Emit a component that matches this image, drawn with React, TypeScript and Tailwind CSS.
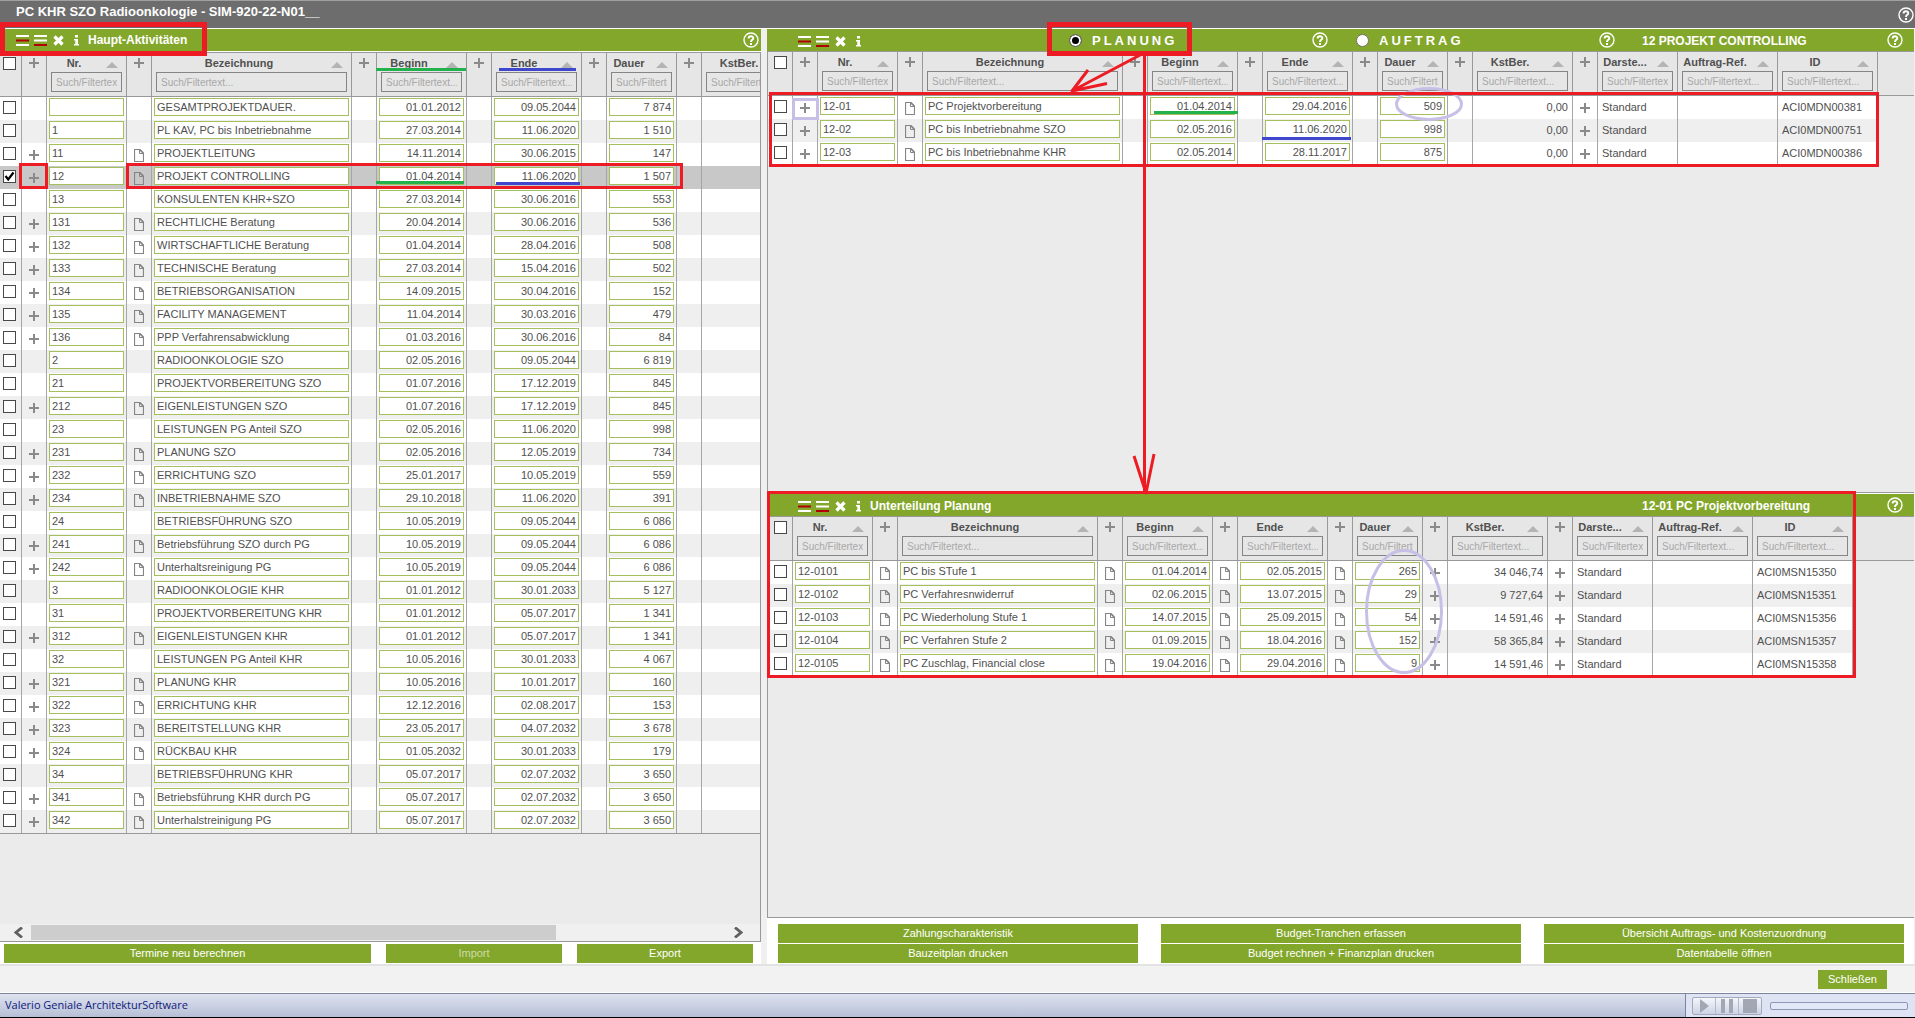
import { useState } from 'react';

type Row = Record<string, string>;

type Column = {
  kind: 'check' | 'icon' | 'edit' | 'text';
  width: string;
  label?: string;
  field?: string;
  right?: boolean;
  icon?: 'plus' | 'doc';
  // rows show the icon only when this row field is set
  when?: string;
};

const iconCol = (icon?: 'plus' | 'doc', when?: string): Column => ({
  kind: 'icon',
  width: 'w-[25px]',
  icon,
  when,
});

const nr: Column = { kind: 'edit', width: 'w-[80px]', label: 'Nr.', field: 'nr' };
const bezeichnung: Column = { kind: 'edit', width: 'w-[200px]', label: 'Bezeichnung', field: 'name' };
const beginn: Column = { kind: 'edit', width: 'w-[90px]', label: 'Beginn', field: 'start', right: true };
const ende: Column = { kind: 'edit', width: 'w-[90px]', label: 'Ende', field: 'end', right: true };
const dauer: Column = { kind: 'edit', width: 'w-[70px]', label: 'Dauer', field: 'days', right: true };
const kstBer: Column = { kind: 'text', width: 'w-[100px]', label: 'KstBer.', field: 'cost', right: true };
const details: Column[] = [
  { kind: 'text', width: 'w-[80px]', label: 'Darste...', field: 'view' },
  { kind: 'text', width: 'w-[100px]', label: 'Auftrag-Ref.', field: 'ref' },
  { kind: 'text', width: 'w-[100px]', label: 'ID', field: 'id' },
];

const mainColumns: Column[] = [
  { kind: 'check', width: 'w-[22px]' },
  iconCol('plus', 'sub'),
  nr,
  iconCol('doc', 'sub'),
  bezeichnung,
  iconCol(),
  beginn,
  iconCol(),
  ende,
  iconCol(),
  dauer,
  iconCol(),
  kstBer,
];

const planColumns: Column[] = [
  { kind: 'check', width: 'w-[25px]' },
  iconCol('plus'),
  nr,
  iconCol('doc'),
  bezeichnung,
  iconCol(),
  beginn,
  iconCol(),
  ende,
  iconCol(),
  dauer,
  iconCol(),
  kstBer,
  iconCol('plus'),
  ...details,
];

const subColumns: Column[] = [
  { kind: 'check', width: 'w-[25px]' },
  nr,
  iconCol('doc'),
  bezeichnung,
  iconCol('doc'),
  beginn,
  iconCol('doc'),
  ende,
  iconCol('doc'),
  dauer,
  iconCol('plus'),
  kstBer,
  iconCol('plus'),
  ...details,
];

const mainRows: Row[] = [
  ['', 'GESAMTPROJEKTDAUER.', '01.01.2012', '09.05.2044', '7 874', ''],
  ['1', 'PL KAV, PC bis Inbetriebnahme', '27.03.2014', '11.06.2020', '1 510', ''],
  ['11', 'PROJEKTLEITUNG', '14.11.2014', '30.06.2015', '147', 'x'],
  ['12', 'PROJEKT CONTROLLING', '01.04.2014', '11.06.2020', '1 507', 'x'],
  ['13', 'KONSULENTEN KHR+SZO', '27.03.2014', '30.06.2016', '553', ''],
  ['131', 'RECHTLICHE Beratung', '20.04.2014', '30.06.2016', '536', 'x'],
  ['132', 'WIRTSCHAFTLICHE Beratung', '01.04.2014', '28.04.2016', '508', 'x'],
  ['133', 'TECHNISCHE Beratung', '27.03.2014', '15.04.2016', '502', 'x'],
  ['134', 'BETRIEBSORGANISATION', '14.09.2015', '30.04.2016', '152', 'x'],
  ['135', 'FACILITY MANAGEMENT', '11.04.2014', '30.03.2016', '479', 'x'],
  ['136', 'PPP Verfahrensabwicklung', '01.03.2016', '30.06.2016', '84', 'x'],
  ['2', 'RADIOONKOLOGIE SZO', '02.05.2016', '09.05.2044', '6 819', ''],
  ['21', 'PROJEKTVORBEREITUNG SZO', '01.07.2016', '17.12.2019', '845', ''],
  ['212', 'EIGENLEISTUNGEN SZO', '01.07.2016', '17.12.2019', '845', 'x'],
  ['23', 'LEISTUNGEN PG Anteil SZO', '02.05.2016', '11.06.2020', '998', ''],
  ['231', 'PLANUNG SZO', '02.05.2016', '12.05.2019', '734', 'x'],
  ['232', 'ERRICHTUNG SZO', '25.01.2017', '10.05.2019', '559', 'x'],
  ['234', 'INBETRIEBNAHME SZO', '29.10.2018', '11.06.2020', '391', 'x'],
  ['24', 'BETRIEBSFÜHRUNG SZO', '10.05.2019', '09.05.2044', '6 086', ''],
  ['241', 'Betriebsführung SZO durch PG', '10.05.2019', '09.05.2044', '6 086', 'x'],
  ['242', 'Unterhaltsreinigung PG', '10.05.2019', '09.05.2044', '6 086', 'x'],
  ['3', 'RADIOONKOLOGIE KHR', '01.01.2012', '30.01.2033', '5 127', ''],
  ['31', 'PROJEKTVORBEREITUNG KHR', '01.01.2012', '05.07.2017', '1 341', ''],
  ['312', 'EIGENLEISTUNGEN KHR', '01.01.2012', '05.07.2017', '1 341', 'x'],
  ['32', 'LEISTUNGEN PG Anteil KHR', '10.05.2016', '30.01.2033', '4 067', ''],
  ['321', 'PLANUNG KHR', '10.05.2016', '10.01.2017', '160', 'x'],
  ['322', 'ERRICHTUNG KHR', '12.12.2016', '02.08.2017', '153', 'x'],
  ['323', 'BEREITSTELLUNG KHR', '23.05.2017', '04.07.2032', '3 678', 'x'],
  ['324', 'RÜCKBAU KHR', '01.05.2032', '30.01.2033', '179', 'x'],
  ['34', 'BETRIEBSFÜHRUNG KHR', '05.07.2017', '02.07.2032', '3 650', ''],
  ['341', 'Betriebsführung KHR durch PG', '05.07.2017', '02.07.2032', '3 650', 'x'],
  ['342', 'Unterhalstreinigung PG', '05.07.2017', '02.07.2032', '3 650', 'x'],
].map(([nr, name, start, end, days, sub]) => ({ nr, name, start, end, days, sub }));

const planRows: Row[] = [
  ['12-01', 'PC Projektvorbereitung', '01.04.2014', '29.04.2016', '509', 'ACI0MDN00381'],
  ['12-02', 'PC bis Inbetriebnahme SZO', '02.05.2016', '11.06.2020', '998', 'ACI0MDN00751'],
  ['12-03', 'PC bis Inbetriebnahme KHR', '02.05.2014', '28.11.2017', '875', 'ACI0MDN00386'],
].map(([nr, name, start, end, days, id]) => ({ nr, name, start, end, days, id, cost: '0,00', view: 'Standard' }));

const subRows: Row[] = [
  ['12-0101', 'PC bis STufe 1', '01.04.2014', '02.05.2015', '265', '34 046,74', 'ACI0MSN15350'],
  ['12-0102', 'PC Verfahresnwiderruf', '02.06.2015', '13.07.2015', '29', '9 727,64', 'ACI0MSN15351'],
  ['12-0103', 'PC Wiederholung Stufe 1', '14.07.2015', '25.09.2015', '54', '14 591,46', 'ACI0MSN15356'],
  ['12-0104', 'PC Verfahren Stufe 2', '01.09.2015', '18.04.2016', '152', '58 365,84', 'ACI0MSN15357'],
  ['12-0105', 'PC Zuschlag, Financial close', '19.04.2016', '29.04.2016', '9', '14 591,46', 'ACI0MSN15358'],
].map(([nr, name, start, end, days, cost, id]) => ({ nr, name, start, end, days, cost, id, view: 'Standard' }));

function PlusIcon() {
  return (
    <svg width="10" height="13" viewBox="0 0 10 13">
      <path d="M0 6H10M5 1V11" stroke="#8a8a8a" strokeWidth="2" />
    </svg>
  );
}

function DocIcon() {
  return (
    <svg width="10" height="13" viewBox="0 0 10 13" fill="none" stroke="#858585">
      <path d="M.5 .5H6L9.500 4V12.500H.5Z" strokeWidth="1.200" />
      <path d="M5.500 .5V4.500H9.500" />
      <path d="M6 1L9 4" strokeWidth="1.400" />
    </svg>
  );
}

function HelpButton() {
  return (
    <button type="button" aria-label="Hilfe" className="block shrink-0">
      <svg width="16" height="16" viewBox="0 0 16 16" fill="none" stroke="#fff">
        <circle cx="8" cy="8" r="7" strokeWidth="1.400" />
        <path d="M5.600 6.400C5.600 3.400 10.400 3.500 10.300 6.300C10.200 7.900 8 7.900 8 10" strokeWidth="1.900" />
        <path d="M8 11V12.900" strokeWidth="2" />
      </svg>
    </button>
  );
}

function ToolIcons() {
  return (
    <div className="flex items-center gap-[5px]">
      <button type="button" aria-label="Zeile einfügen">
        <svg className="block" width="13" height="12" viewBox="0 0 13 12">
          <path d="M0 2H13M0 11H13" stroke="#fff" strokeWidth="2" />
          <path d="M0 6.500H13" stroke="#b00000" strokeWidth="2" />
        </svg>
      </button>
      <button type="button" aria-label="Zeile anhängen">
        <svg className="block" width="13" height="12" viewBox="0 0 13 12">
          <path d="M0 2H13M0 6.500H13" stroke="#fff" strokeWidth="2" />
          <path d="M0 11H13" stroke="#b00000" strokeWidth="2" />
        </svg>
      </button>
      <button type="button" aria-label="Löschen">
        <svg className="block" width="13" height="12" viewBox="0 0 13 12">
          <path d="M2.500 2.500L10.500 10.500M10.500 2.500L2.500 10.500" stroke="#fff" strokeWidth="3.200" />
        </svg>
      </button>
      <button type="button" aria-label="Info">
        <svg className="block" width="13" height="12" viewBox="0 0 13 12" fill="#fff">
          <path d="M5 1H8V3.500H5ZM4 5H8V10H9V11.500H4V10H5.300V6.500H4Z" />
        </svg>
      </button>
    </div>
  );
}

function Check({ label, checked = false }: { label: string; checked?: boolean }) {
  return (
    <span className="relative block h-[13px] w-[13px]">
      <input
        type="checkbox"
        aria-label={label}
        defaultChecked={checked}
        className="peer block h-[13px] w-[13px] appearance-none border border-[#484848] bg-white"
      />
      <svg
        className="pointer-events-none absolute top-0 left-0 hidden peer-checked:block"
        width="13"
        height="13"
        viewBox="0 0 13 13"
      >
        <path d="M2.500 6L5.200 9.500L10.500 2.500" fill="none" stroke="#000" strokeWidth="2.200" />
      </svg>
    </span>
  );
}

function HeaderCell({ column }: { column: Column }) {
  if (column.kind === 'check') {
    return (
      <div className="flex h-[43px] justify-end pt-1 pr-[5px]">
        <Check label="Alle auswählen" />
      </div>
    );
  }
  if (column.kind === 'icon') {
    return (
      <button type="button" aria-label="Spalte öffnen" className="flex h-[43px] w-full justify-center pt-1">
        <PlusIcon />
      </button>
    );
  }
  return (
    <div className="h-[43px]">
      <div className="flex h-[19px] items-center">
        <span className="flex-1 pt-[2px] text-center whitespace-nowrap">{column.label}</span>
        <svg className="mt-[5px] mr-2 ml-[5px] shrink-0" width="12" height="6" viewBox="0 0 12 6">
          <path d="M0 6L6 0L12 6Z" fill="#b4b4b4" />
        </svg>
      </div>
      <div className="px-1">
        <input
          type="text"
          aria-label={`Filter ${column.label}`}
          placeholder="Such/Filtertext..."
          className="block h-5 w-full border border-[#858585] bg-transparent px-1 text-[10px] font-normal placeholder:text-[#a8a8a8]"
        />
      </div>
    </div>
  );
}

function BodyCell({ column, row, selected }: { column: Column; row: Row; selected: boolean }) {
  const value = row[column.field ?? ''] ?? '';
  if (column.kind === 'check') {
    return (
      <div className="flex h-[23px] justify-end pt-1 pr-[5px]">
        <Check label={`${row.nr} ${row.name} auswählen`} checked={selected} />
      </div>
    );
  }
  if (column.kind === 'icon') {
    if (!column.icon || (column.when && !row[column.when])) return null;
    return (
      <button
        type="button"
        aria-label={column.icon === 'plus' ? 'Aufklappen' : 'Notiz'}
        className="flex h-[23px] w-full items-center justify-center pt-[2px]"
      >
        {column.icon === 'plus' ? <PlusIcon /> : <DocIcon />}
      </button>
    );
  }
  if (column.kind === 'edit') {
    return (
      <div className="h-[23px] px-[2px] pt-px">
        <input
          type="text"
          aria-label={column.label}
          defaultValue={value}
          className={`block h-[18px] w-full border border-[#a3c05c] bg-white px-[2px] ${column.right ? 'text-right' : ''}`}
        />
      </div>
    );
  }
  return (
    <div className={`h-[23px] px-1 leading-[23px] whitespace-nowrap ${column.right ? 'text-right' : ''}`}>
      {value}
    </div>
  );
}

function Grid({ columns, rows, selected }: { columns: Column[]; rows: Row[]; selected?: string }) {
  return (
    <table className="w-full table-fixed border-separate border-spacing-0 border-t border-[#999999] text-[11px] text-[#505050]">
      <thead className="bg-[#e6e6e6]">
        <tr>
          {columns.map((column, i) => (
            <th key={i} className={`${column.width} border-r border-b border-[#999999] p-0 align-top`}>
              <HeaderCell column={column} />
            </th>
          ))}
          <th className="border-b border-[#999999] p-0" />
        </tr>
      </thead>
      <tbody>
        {rows.map((row, n) => {
          const active = selected !== undefined && row.nr === selected;
          const bg = active ? 'bg-[#c8c8c8]' : n % 2 ? 'bg-[#efefef]' : 'bg-white';
          return (
            <tr key={n}>
              {columns.map((column, i) => (
                <td key={i} className={`${bg} h-[23px] border-r border-[#a6a6a6] p-0 align-top`}>
                  <BodyCell column={column} row={row} selected={active} />
                </td>
              ))}
              <td className="p-0" />
            </tr>
          );
        })}
      </tbody>
    </table>
  );
}

function ActionButton({ label, disabled = false, className = '' }: { label: string; disabled?: boolean; className?: string }) {
  return (
    <button
      type="button"
      disabled={disabled}
      className={`h-[19px] bg-[#83a72b] text-center text-[11px] leading-[19px] text-white disabled:text-[#cddba8] ${className}`}
    >
      {label}
    </button>
  );
}

function MainPanel() {
  return (
    <section className="relative flex w-[761px] shrink-0 flex-col bg-white">
      <header className="flex h-[22px] items-center bg-[#83a72b] pr-[2px] pl-4 text-xs font-bold text-white">
        <ToolIcons />
        <h2 className="ml-[5px] flex-1">Haupt-Aktivitäten</h2>
        <HelpButton />
      </header>
      <div className="mt-px flex flex-1 flex-col border-r border-b border-[#999999] bg-[#ebebeb]">
        <div className="flex-1 overflow-hidden">
          <Grid columns={mainColumns} rows={mainRows} selected="12" />
          <div className="border-t border-[#999999]" />
        </div>
        <div className="flex h-[17px] items-center bg-[#f0f0f0]">
          <button type="button" aria-label="Nach links" className="flex w-[31px] justify-center pl-[6px]">
            <svg width="9" height="11" viewBox="0 0 9 11">
              <path d="M8 .5L2 5.500L8 10.500" fill="none" stroke="#606060" strokeWidth="2.800" />
            </svg>
          </button>
          <div className="flex-1">
            <div className="h-[15px] w-3/4 bg-[#cdcdcd]" />
          </div>
          <button type="button" aria-label="Nach rechts" className="flex w-[29px] justify-start pl-[3px]">
            <svg width="9" height="11" viewBox="0 0 9 11">
              <path d="M1 .5L7 5.500L1 10.500" fill="none" stroke="#606060" strokeWidth="2.800" />
            </svg>
          </button>
        </div>
      </div>
      <div className="flex gap-[15px] pt-[2px] pr-2 pb-px pl-1">
        <ActionButton label="Termine neu berechnen" className="w-[367px]" />
        <ActionButton label="Import" disabled className="flex-1" />
        <ActionButton label="Export" className="flex-1" />
      </div>
      <svg
        className="pointer-events-none absolute top-0 left-0 overflow-visible"
        width="700"
        height="170"
        viewBox="0 29 700 170"
        fill="none"
        stroke="#ed1c24"
        strokeWidth="3"
      >
        <rect x="2.500" y="24.500" width="202" height="29" strokeWidth="5" />
        <rect x="20.500" y="164.500" width="26" height="23" />
        <rect x="127.500" y="164.500" width="554" height="23" />
        <path d="M376 69.500H466M376 182.500H464" stroke="#22b14c" />
        <path d="M499 69.500H576M496 183.500H580" stroke="#3f48cc" />
      </svg>
    </section>
  );
}

function ModeRadio({ label, checked, onChange }: { label: string; checked: boolean; onChange: () => void }) {
  return (
    <label className="flex w-[243px] items-center gap-[10px] pt-[2px] text-[13px] tracking-[3px]">
      <input
        type="radio"
        name="mode"
        checked={checked}
        onChange={onChange}
        className="h-[13px] w-[13px] appearance-none rounded-full border border-[#707070] bg-white checked:bg-black checked:shadow-[inset_0_0_0_2px_white]"
      />
      {label}
    </label>
  );
}

function PlanPanel() {
  const [mode, setMode] = useState('planung');

  return (
    <section className="relative flex min-w-0 flex-1 flex-col bg-white">
      <div className="flex h-[464px] flex-col">
        <header className="flex h-[22px] shrink-0 items-center bg-[#83a72b] pr-[11px] pl-[31px] text-xs font-bold text-white">
          <div className="w-[271px] pt-[2px]">
            <ToolIcons />
          </div>
          <ModeRadio label="PLANUNG" checked={mode === 'planung'} onChange={() => setMode('planung')} />
          <HelpButton />
          <div className="w-7" />
          <ModeRadio label="AUFTRAG" checked={mode === 'auftrag'} onChange={() => setMode('auftrag')} />
          <HelpButton />
          <h2 className="ml-[27px] flex-1 pt-[2px] whitespace-nowrap">12 PROJEKT CONTROLLING</h2>
          <HelpButton />
        </header>
        <div className="flex-1 overflow-hidden border-b border-l border-[#999999] bg-[#ebebeb]">
          <Grid columns={planColumns} rows={planRows} />
        </div>
      </div>
      <header className="mt-px flex h-[22px] shrink-0 items-center bg-[#83a72b] pr-[11px] pl-[31px] text-xs font-bold text-white">
        <div className="flex w-[844px] items-center gap-[5px] pt-[2px]">
          <ToolIcons />
          <h2>Unterteilung Planung</h2>
        </div>
        <h3 className="flex-1 pt-[2px] whitespace-nowrap">12-01 PC Projektvorbereitung</h3>
        <HelpButton />
      </header>
      <div className="flex-1 overflow-hidden border-b border-l border-[#999999] bg-[#ebebeb]">
        <Grid columns={subColumns} rows={subRows} />
      </div>
      <div className="grid grid-cols-3 gap-x-[23px] gap-y-px pt-[6px] pr-[10px] pb-px pl-[11px]">
        <ActionButton label="Zahlungscharakteristik" />
        <ActionButton label="Budget-Tranchen erfassen" />
        <ActionButton label="Übersicht Auftrags- und Kostenzuordnung" />
        <ActionButton label="Bauzeitplan drucken" />
        <ActionButton label="Budget rechnen + Finanzplan drucken" />
        <ActionButton label="Datentabelle öffnen" />
      </div>
      <svg
        className="pointer-events-none absolute top-0 left-0 overflow-visible"
        width="1100"
        height="650"
        viewBox="767 29 1100 650"
        fill="none"
        stroke="#ed1c24"
        strokeWidth="3"
      >
        <g stroke="#c8bfe7">
          <rect x="793.500" y="99.500" width="24" height="19" />
          <ellipse cx="1429" cy="104" rx="32.500" ry="15.500" />
          <ellipse cx="1404" cy="611.500" rx="37.500" ry="61" />
        </g>
        <path d="M1154 112.500H1238" stroke="#22b14c" />
        <path d="M1262 138.500H1351" stroke="#3f48cc" />
        <rect x="1049.500" y="24.500" width="140" height="29" strokeWidth="5" />
        <rect x="770.500" y="93.500" width="1107" height="72" />
        <rect x="768.500" y="492.500" width="1086" height="184" />
        <path d="M1144.500 51V492" />
        <path d="M1142 54L1072 91M1088 70L1072 91L1107 83.500" strokeLinejoin="round" />
        <path d="M1134 456L1146 493L1154 454" strokeLinejoin="round" />
      </svg>
    </section>
  );
}

function StatusBar() {
  return (
    <div className="flex h-[25px] border-t border-b border-t-[#7d84a0] border-b-black bg-linear-to-b from-[#dfe3f0] to-[#b6bfd6]">
      <p className="flex-1 pl-[5px] font-['Open_Sans',sans-serif] text-[11px] leading-[22px] text-[#10207c]">
        Valerio Geniale ArchitekturSoftware
      </p>
      <div className="flex w-[230px] items-center gap-2 border-l border-[#7d84a0] bg-[#dfe4f4] pr-[7px] pl-[6px]">
        <div className="flex h-[18px] w-[70px] divide-x divide-[#b4bacb] rounded-xs border border-[#a4aabb] bg-linear-to-b from-[#f4f6fb] to-[#ccd3e4]">
          <button type="button" aria-label="Start" className="flex flex-1 items-center justify-center">
            <svg width="10" height="14" viewBox="0 0 10 14">
              <path d="M1 0L10 7L1 14Z" fill="#a3a7b3" />
            </svg>
          </button>
          <button type="button" aria-label="Pause" className="flex flex-1 items-center justify-center">
            <svg width="12" height="14" viewBox="0 0 12 14">
              <path d="M0 0H4V14H0ZM8 0H12V14H8Z" fill="#a3a7b3" />
            </svg>
          </button>
          <button type="button" aria-label="Stopp" className="flex flex-1 items-center justify-center">
            <svg width="14" height="14" viewBox="0 0 14 14">
              <path d="M0 0H14V14H0Z" fill="#a3a7b3" />
            </svg>
          </button>
        </div>
        <div className="h-2 flex-1 rounded-xs border border-[#8d97b8] bg-[#e3e8f7]" />
      </div>
    </div>
  );
}

export default function App() {
  return (
    <div className="flex min-h-screen flex-col bg-[#f0f0f0] font-['Liberation_Sans',Arial,sans-serif]">
      <header className="flex h-7 items-center border-t border-[#a0a0a0] bg-[#6d6d6d] pr-[1px] pl-4">
        <h1 className="flex-1 pb-[5px] text-[13px] font-bold text-white">
          PC KHR SZO Radioonkologie - SIM-920-22-N01__
        </h1>
        <HelpButton />
      </header>
      <main className="flex flex-1 gap-[6px] border-t border-white pr-px">
        <MainPanel />
        <PlanPanel />
      </main>
      <footer className="flex h-[29px] justify-end border-t-2 border-b border-t-[#e3e3e3] border-b-white bg-[#f2f2f2] pt-1 pr-7">
        <ActionButton label="Schließen" className="w-[69px]" />
      </footer>
      <StatusBar />
    </div>
  );
}
